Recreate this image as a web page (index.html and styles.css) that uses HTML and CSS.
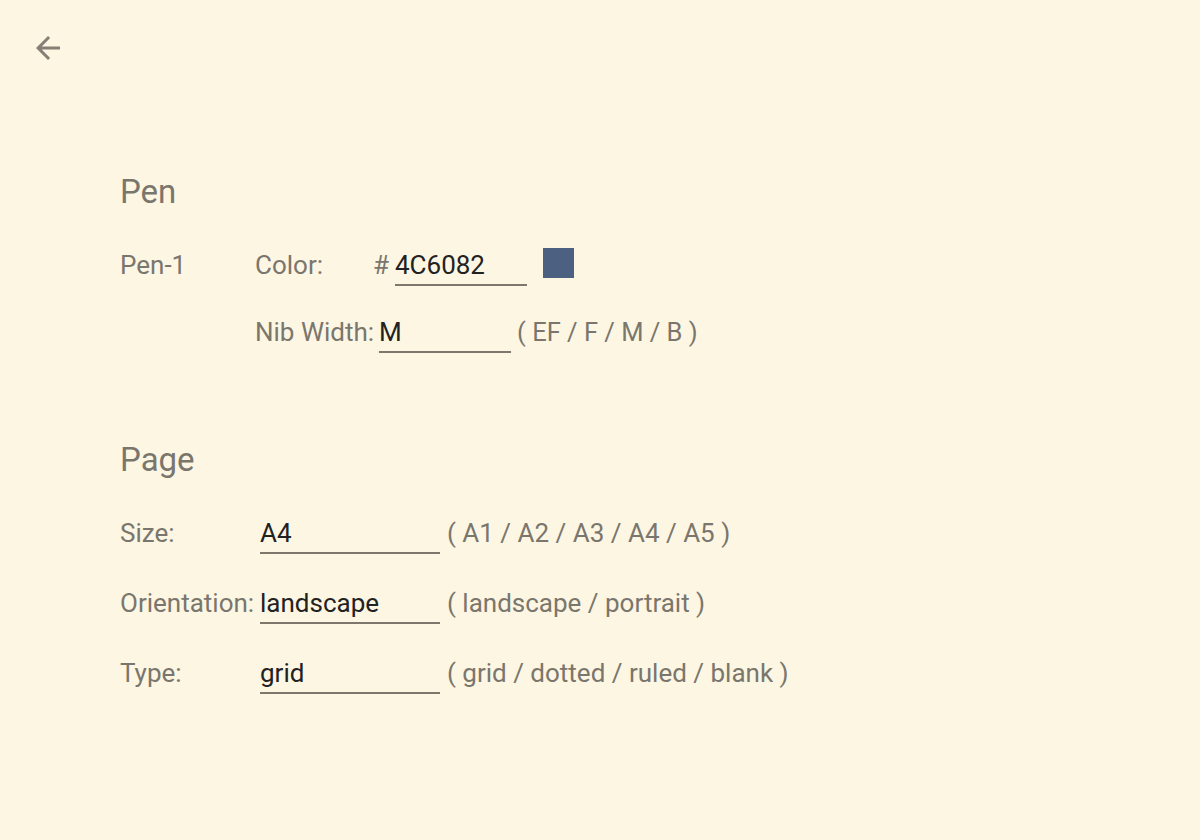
FILE: index.html
```html
<!DOCTYPE html>
<html lang="en">
<head>
<meta charset="utf-8">
<title>Settings</title>
<link rel="stylesheet" href="styles.css">
</head>
<body>
<header class="topbar">
  <button class="back" aria-label="Back">
    <svg viewBox="0 0 24 24" width="36" height="36"><path d="M20 11H7.83l5.59-5.59L12 4l-8 8 8 8 1.41-1.41L7.83 13H20v-2z" fill="currentColor"/></svg>
  </button>
</header>
<main class="content">
  <section class="section pen">
    <h2 class="title">Pen</h2>
    <div class="pen-grid">
      <div class="pen-name">Pen-1</div>
      <div class="pen-fields">
        <div class="row">
          <span class="label sub">Color:</span>
          <span class="hash">#</span>
          <span class="field short">4C6082</span>
          <span class="swatch"></span>
        </div>
        <div class="row">
          <span class="label sub">Nib Width:</span>
          <span class="field short">M</span>
          <span class="hint pen-hint">( EF / F / M / B )</span>
        </div>
      </div>
    </div>
  </section>
  <section class="section page">
    <h2 class="title">Page</h2>
    <div class="page-rows">
      <div class="row">
        <span class="label main-label">Size:</span>
        <span class="field long">A4</span>
        <span class="hint">( A1 / A2 / A3 / A4 / A5 )</span>
      </div>
      <div class="row">
        <span class="label main-label">Orientation:</span>
        <span class="field long">landscape</span>
        <span class="hint">( landscape / portrait )</span>
      </div>
      <div class="row">
        <span class="label main-label">Type:</span>
        <span class="field long">grid</span>
        <span class="hint">( grid / dotted / ruled / blank )</span>
      </div>
    </div>
  </section>
</main>
</body>
</html>
```
FILE: styles.css
```css
html, body {
  margin: 0;
  padding: 0;
  background: #fdf6e3;
  font-family: Roboto, "Noto Sans", sans-serif;
  color: #7a766d;
  width: 1200px;
  height: 840px;
  overflow: hidden;
}
.topbar {
  height: 96px;
  padding: 30px 0 0 30px;
  box-sizing: border-box;
}
.back {
  display: block;
  width: 36px;
  height: 36px;
  padding: 0;
  margin: 0;
  border: 0;
  background: none;
  color: #857f75;
  cursor: pointer;
}
.back svg { display: block; }
.content {
  padding: 76px 0 0 120px;
}
.title {
  margin: 0;
  font-size: 33px;
  line-height: 40px;
  font-weight: 400;
  color: #7a766d;
}
.section.page { margin-top: 91px; }
.pen-grid {
  display: flex;
  margin-top: 36px;
}
.pen-name {
  width: 135px;
  font-size: 26px;
  line-height: 34px;
}
.pen-fields {
  display: flex;
  flex-direction: column;
  gap: 33px;
}
.page-rows {
  display: flex;
  flex-direction: column;
  gap: 36px;
  margin-top: 36px;
}
.row {
  display: flex;
  align-items: flex-start;
  font-size: 26px;
  line-height: 34px;
  height: 34px;
}
.label.sub {
  min-width: 113px;
  padding-right: 5px;
}
.label.main-label { width: 140px; flex: none; }
.hash { width: 22px; }
.field {
  display: block;
  flex: none;
  height: 36px;
  border-bottom: 2px solid #7e776b;
  color: #222;
  box-sizing: content-box;
}
.field.short { width: 132px; }
.field.long { width: 180px; }
.hint { margin-left: 7px; white-space: nowrap; }
.hint.pen-hint { margin-left: 6px; font-size: 25.5px; }
.swatch {
  width: 31px;
  height: 30px;
  margin-left: 16px;
  background: #4c6082;
}
```
